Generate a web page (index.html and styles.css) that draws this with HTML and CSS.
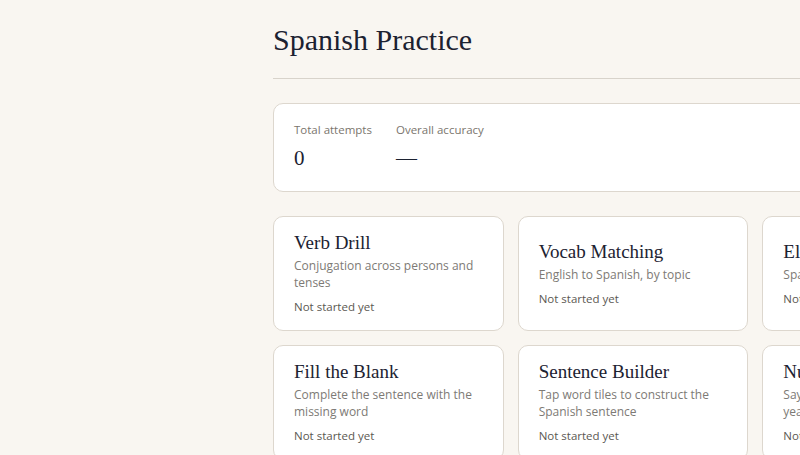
FILE: index.html
```html
<!DOCTYPE html>
<html lang="en">
<head>
<meta charset="utf-8">
<title>Spanish Practice</title>
<link rel="stylesheet" href="styles.css">
</head>
<body>
<main class="page">
  <header class="page-header">
    <h1 class="page-title">Spanish Practice</h1>
  </header>

  <section class="stats">
    <div class="stat">
      <div class="stat-label">Total attempts</div>
      <div class="stat-value">0</div>
    </div>
    <div class="stat">
      <div class="stat-label">Overall accuracy</div>
      <div class="stat-value">—</div>
    </div>
  </section>

  <section class="modes">
    <a class="mode-card" href="#">
      <h2 class="mode-title">Verb Drill</h2>
      <p class="mode-desc">Conjugation across persons and tenses</p>
      <p class="mode-status">Not started yet</p>
    </a>
    <a class="mode-card" href="#">
      <h2 class="mode-title">Vocab Matching</h2>
      <p class="mode-desc">English to Spanish, by topic</p>
      <p class="mode-status">Not started yet</p>
    </a>
    <a class="mode-card" href="#">
      <h2 class="mode-title">El o La</h2>
      <p class="mode-desc">Spanish noun genders</p>
      <p class="mode-status">Not started yet</p>
    </a>
    <a class="mode-card" href="#">
      <h2 class="mode-title">Fill the Blank</h2>
      <p class="mode-desc">Complete the sentence with the missing word</p>
      <p class="mode-status">Not started yet</p>
    </a>
    <a class="mode-card" href="#">
      <h2 class="mode-title">Sentence Builder</h2>
      <p class="mode-desc">Tap word tiles to construct the Spanish sentence</p>
      <p class="mode-status">Not started yet</p>
    </a>
    <a class="mode-card" href="#">
      <h2 class="mode-title">Numbers</h2>
      <p class="mode-desc">Say prices, times, ages, dates and years aloud</p>
      <p class="mode-status">Not started yet</p>
    </a>
  </section>
</main>
</body>
</html>
```

FILE: styles.css
```css
html, body {
  margin: 0;
  padding: 0;
  overflow: hidden;
}

body {
  background: #f9f6f1;
  color: #1c2231;
  font-family: "Open Sans", "Noto Sans", sans-serif;
}

.page {
  width: 720px;
  margin-left: 273px;
  padding-top: 22px;
}

.page-header {
  padding-bottom: 20px;
  border-bottom: 1px solid #d8d3cb;
}

.page-title {
  margin: 0;
  font-family: "Liberation Serif", "DejaVu Serif", serif;
  font-weight: 400;
  font-size: 30px;
  line-height: 36px;
  color: #1c2231;
}

.stats {
  margin-top: 24px;
  display: flex;
  gap: 24px;
  padding: 18px 20px 19px;
  background: #ffffff;
  border: 1px solid #ddd7ce;
  border-radius: 10px;
}

.stat-label {
  font-size: 11.5px;
  line-height: 16px;
  color: #7a756d;
}

.stat-value {
  margin-top: 6px;
  font-family: "Liberation Serif", "DejaVu Serif", serif;
  font-size: 21px;
  line-height: 28px;
  color: #1c2231;
}

.modes {
  margin-top: 24px;
  display: grid;
  grid-template-columns: repeat(3, 1fr);
  gap: 14px;
}

.mode-card {
  display: flex;
  flex-direction: column;
  justify-content: center;
  padding: 15px 20px;
  background: #ffffff;
  border: 1px solid #ddd7ce;
  border-radius: 10px;
  text-decoration: none;
  color: inherit;
}

.mode-title {
  margin: 0;
  font-family: "Liberation Serif", "DejaVu Serif", serif;
  font-weight: 400;
  font-size: 19px;
  line-height: 22px;
  color: #1c2231;
}

.mode-desc {
  margin: 3px 0 0;
  font-size: 12px;
  line-height: 17px;
  color: #7d7a75;
}

.mode-status {
  margin: 8px 0 0;
  font-size: 11.5px;
  line-height: 16px;
  color: #5b5852;
}
```
